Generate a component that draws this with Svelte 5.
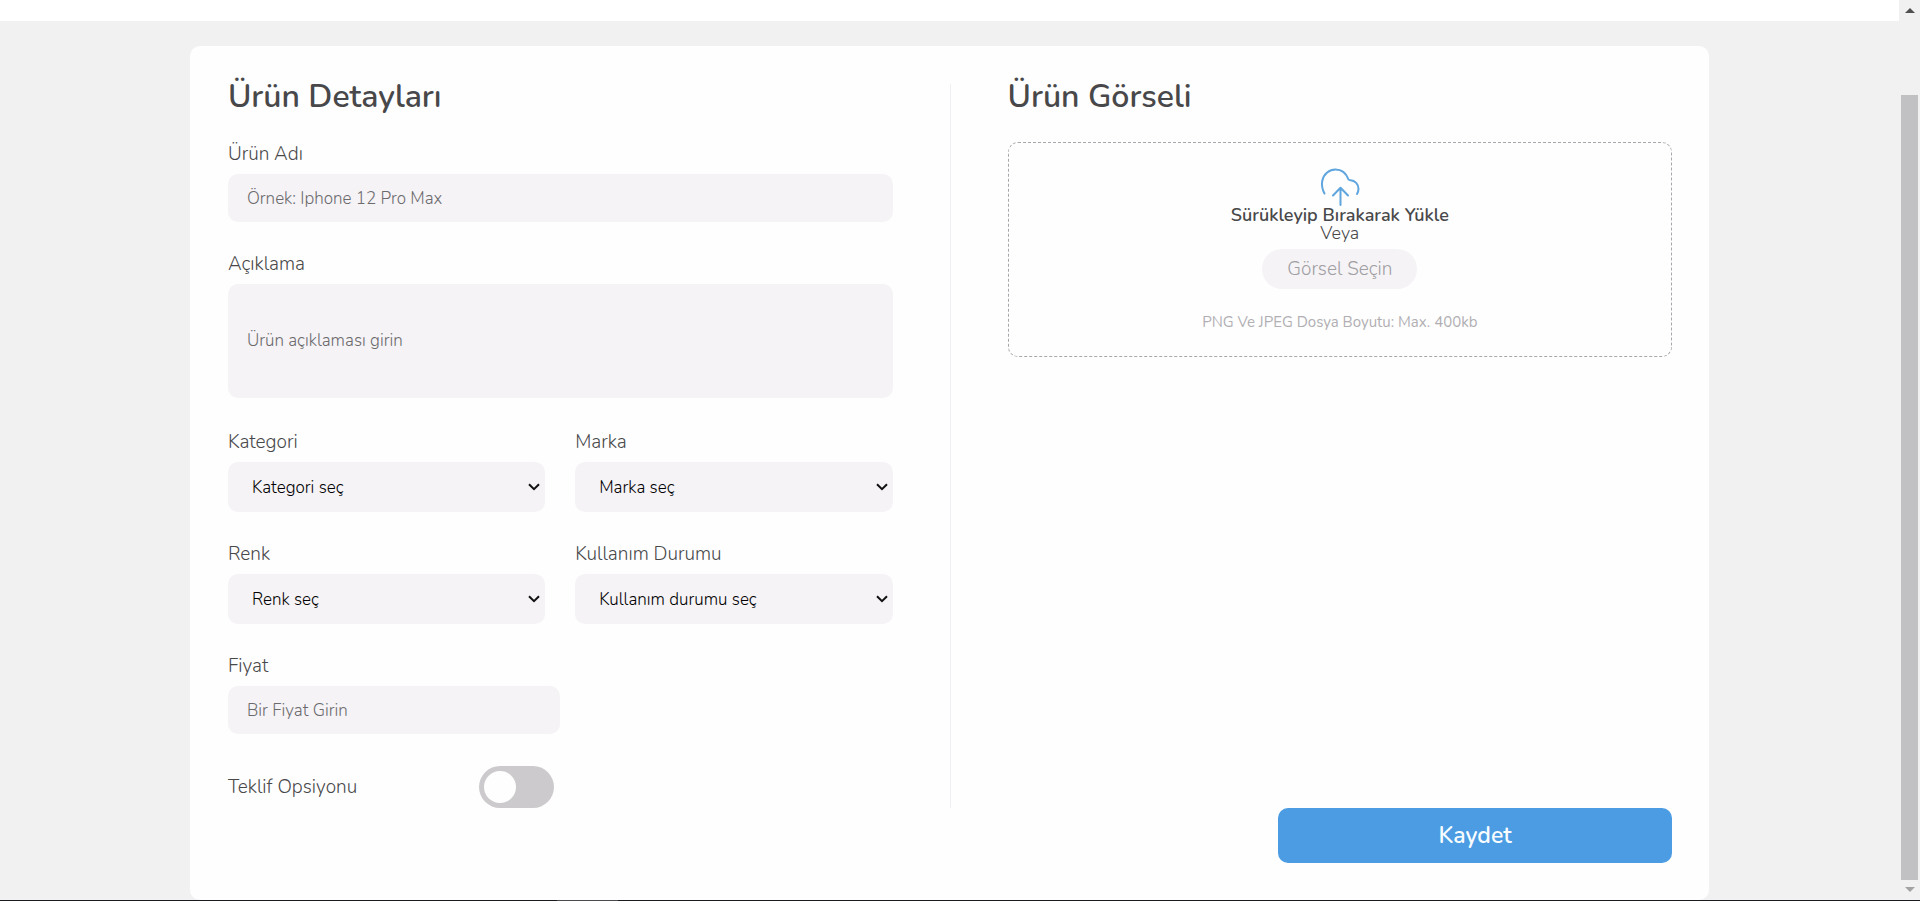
<script lang="ts">
  let name = $state('');
  let description = $state('');
  let price = $state('');
  let offer = $state(false);

  const selects = [
    { id: 'category', label: 'Kategori', hint: 'Kategori seç' },
    { id: 'brand', label: 'Marka', hint: 'Marka seç' },
    { id: 'color', label: 'Renk', hint: 'Renk seç' },
    { id: 'usage', label: 'Kullanım Durumu', hint: 'Kullanım durumu seç' }
  ];
</script>

<div class="screen">
  <div class="view">
    <div class="page">
      <header class="strip"></header>
      <main>
        <form class="card" onsubmit={(e) => e.preventDefault()}>
          <div class="columns">
            <section class="details">
              <h2>Ürün Detayları</h2>
              <div class="fields">
                <div class="field">
                  <label for="name">Ürün Adı</label>
                  <input id="name" class="box" type="text" placeholder="Örnek: Iphone 12 Pro Max" bind:value={name} />
                </div>
                <div class="field">
                  <label for="description">Açıklama</label>
                  <textarea id="description" class="box" placeholder="Ürün açıklaması girin" bind:value={description}></textarea>
                </div>
                <div class="pairs">
                  {#each selects as s (s.id)}
                    <div class="field">
                      <label for={s.id}>{s.label}</label>
                      <div class="select">
                        <select id={s.id} class="box"><option>{s.hint}</option></select>
                        <svg viewBox="0 0 12 8" width="12" height="8" aria-hidden="true"><path d="M1 1.2 6 6.2 11 1.2" /></svg>
                      </div>
                    </div>
                  {/each}
                </div>
                <div class="field half">
                  <label for="price">Fiyat</label>
                  <input id="price" class="box" type="text" placeholder="Bir Fiyat Girin" bind:value={price} />
                </div>
                <div class="offer half">
                  <label for="offer">Teklif Opsiyonu</label>
                  <input id="offer" class="switch" type="checkbox" role="switch" bind:checked={offer} />
                </div>
              </div>
            </section>
            <div class="divider"></div>
            <section>
              <h2>Ürün Görseli</h2>
              <div class="drop">
                <svg class="cloud" viewBox="0 0 40 38" width="40" height="38" aria-hidden="true">
                  <path d="M4.5 25.5C2.600 22 1.400 17.500 2.200 13 3.700 5.800 9.500 1.500 15.500 1.500c6 0 10.500 3.500 12.800 9.600 .5 1 1.200 1.200 2.200 1.200 4.500 .2 8 4 8 8.500 0 1.800-.5 3.600-1.500 5.200" />
                  <path d="M20.500 37V20M13 27.500 20.500 19.800 28 27.500" />
                </svg>
                <strong>Sürükleyip Bırakarak Yükle</strong>
                <span class="or">Veya</span>
                <button type="button" class="pick">Görsel Seçin</button>
                <small>PNG Ve JPEG Dosya Boyutu: Max. 400kb</small>
              </div>
            </section>
          </div>
          <div class="actions">
            <button type="submit" class="save">Kaydet</button>
          </div>
        </form>
      </main>
    </div>
    <div class="scrollbar" aria-hidden="true">
      <svg class="up" viewBox="0 0 10 5" width="10" height="5"><path d="M0 5 5 0l5 5z" /></svg>
      <div class="thumb"></div>
      <svg class="down" viewBox="0 0 10 5" width="10" height="5"><path d="M0 0h10L5 5z" /></svg>
    </div>
  </div>
  <div class="edge"><div class="active"></div></div>
</div>

<style>
  :global(body) {
    margin: 0;
    background: #f2f1f2;
  }
  .screen,
  .screen :global(*) {
    box-sizing: border-box;
  }
  .screen {
    display: flex;
    flex-direction: column;
    min-height: 100vh;
    color: #48484a;
    font-family: Nunito, Lato, sans-serif;
    font-size: 19px;
    font-weight: 300;
  }
  .view {
    display: flex;
    flex: 1;
  }
  .page {
    flex: 1;
    min-width: 0;
  }
  .strip {
    height: 21px;
    background: #fff;
  }
  main {
    padding: 25px 10% 0;
  }
  .card {
    padding: 38px 37px 37px 38px;
    border-radius: 10px;
    background: #fefefe;
  }
  .columns {
    display: grid;
    grid-template-columns: minmax(0, 1fr) 1px minmax(0, 1fr);
    column-gap: 57px;
  }
  .divider {
    background: #f0eef2;
  }
  h2 {
    margin: 0;
    font-size: 32px;
    line-height: 26px;
    font-weight: 600;
  }
  .fields {
    display: flex;
    flex-direction: column;
    gap: 32px;
    margin-top: 34px;
  }
  .field {
    display: flex;
    flex-direction: column;
    gap: 10px;
    min-width: 0;
  }
  label {
    line-height: 20px;
  }
  .half {
    width: 50%;
  }
  .pairs {
    display: grid;
    grid-template-columns: repeat(2, minmax(0, 1fr));
    gap: 32px 30px;
  }
  .box {
    width: 100%;
    height: 48px;
    padding: 0 19px;
    border: 0;
    border-radius: 10px;
    background: #f5f3f6;
    color: #48484a;
    font: inherit;
    font-size: 17px;
    outline: none;
  }
  .box::placeholder {
    color: #6b6a6d;
    opacity: 1;
  }
  textarea.box {
    display: block;
    height: 114px;
    margin-bottom: 2px;
    padding: 46px 19px;
    line-height: 22px;
    resize: none;
    overflow: hidden;
  }
  .select {
    display: grid;
    align-items: center;
  }
  .select > * {
    grid-area: 1 / 1;
  }
  select.box {
    height: 50px;
    padding: 0 24px;
    color: #000;
    appearance: none;
  }
  .select svg {
    justify-self: end;
    margin-right: 5px;
    pointer-events: none;
    fill: none;
    stroke: #111;
    stroke-width: 2;
  }
  .offer {
    display: flex;
    align-items: center;
    justify-content: space-between;
    padding-right: 6px;
  }
  .switch {
    appearance: none;
    display: flex;
    width: 75px;
    height: 42px;
    margin: 0;
    padding: 5px;
    border-radius: 21px;
    background: #cccacd;
  }
  .switch::before {
    content: '';
    width: 32px;
    height: 32px;
    border-radius: 50%;
    background: #fefefe;
  }
  .switch:checked {
    justify-content: flex-end;
    background: #4b9ce2;
  }
  .drop {
    display: flex;
    flex-direction: column;
    align-items: center;
    margin-top: 32px;
    padding: 25px 20px 24px;
    border: 1px dashed #a9a7ab;
    border-radius: 10px;
  }
  .cloud {
    fill: none;
    stroke: #5fa5de;
    stroke-width: 2;
    stroke-linecap: round;
    stroke-linejoin: round;
  }
  strong,
  .or {
    font-size: 18px;
    line-height: 18px;
  }
  strong {
    font-weight: 600;
  }
  .pick {
    margin: 7px 0 23px;
    padding: 0 25px;
    height: 40px;
    border: 0;
    border-radius: 20px;
    background: #f5f3f6;
    color: #a09ea2;
    font: inherit;
  }
  small {
    font-size: 15px;
    line-height: 20px;
    font-weight: 400;
    color: #b1afb3;
  }
  .actions {
    display: flex;
    justify-content: flex-end;
  }
  .save {
    width: 394px;
    height: 55px;
    border: 0;
    border-radius: 10px;
    background: #4b9ce2;
    color: #f8fcff;
    font: inherit;
    font-size: 23px;
    font-weight: 600;
  }
  .scrollbar {
    display: flex;
    flex-direction: column;
    align-items: center;
    width: 21px;
    padding: 8px 0;
    background: #f1f1f1;
  }
  .up {
    fill: #505050;
  }
  .down {
    margin-top: 7px;
    fill: #a3a3a3;
  }
  .thumb {
    flex: 1;
    width: 17px;
    margin-top: 82px;
    background: #c1c0c2;
  }
  .edge {
    display: flex;
    height: 1px;
    background: #1b1b1f;
  }
  .active {
    width: 61px;
    margin-left: 29%;
    background: #4a4a4e;
  }
</style>
